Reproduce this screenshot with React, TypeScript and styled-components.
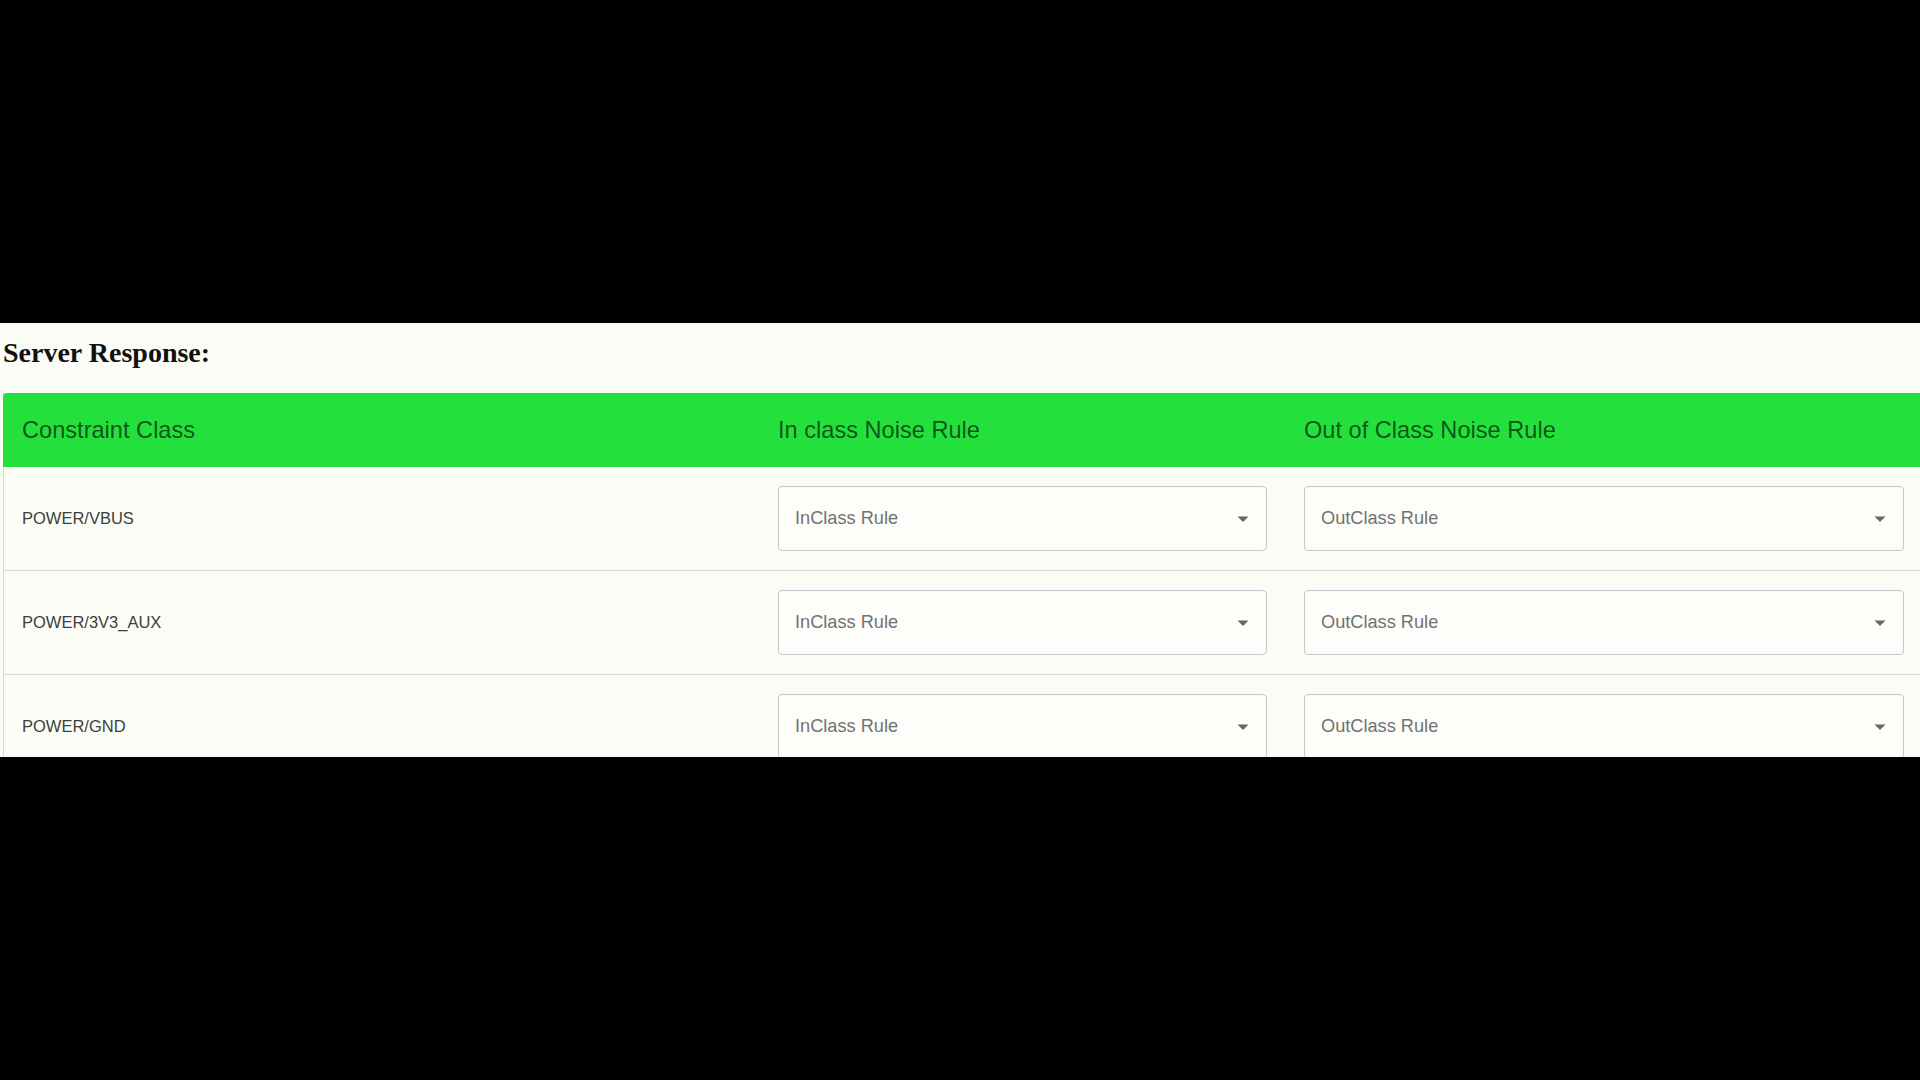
import React from "react";
import styled, { createGlobalStyle } from "styled-components";

const GlobalStyle = createGlobalStyle`
  html, body {
    margin: 0;
    padding: 0;
    background: #000;
  }
`;

const Page = styled.div`
  height: 100vh;
  display: flex;
  flex-direction: column;
  justify-content: flex-start;
  padding-top: 323px;
  box-sizing: border-box;
`;

const Frame = styled.div`
  height: 434px;
  overflow: hidden;
  background: #fcfcf7;
  padding-left: 3px;
`;

const Heading = styled.h2`
  margin: 14px 0 24px 0;
  font-family: "Liberation Serif", "Times New Roman", serif;
  font-weight: bold;
  font-size: 28px;
  line-height: 32px;
  color: #111;
`;

const Table = styled.div`
  display: flex;
  flex-direction: column;
  border-left: 1px solid #d6d6de;
`;

const HeaderRow = styled.div`
  display: grid;
  grid-template-columns: 756px 526px 1fr;
  height: 74px;
  align-items: center;
  background: #24e03c;
  border-top-left-radius: 4px;
  margin-left: -1px;
`;

const HeaderCell = styled.div`
  padding: 0 19px;
  font-family: "Liberation Sans", Arial, sans-serif;
  font-size: 23.6px;
  color: rgba(0, 0, 0, 0.64);
  white-space: nowrap;
`;

const Row = styled.div`
  display: grid;
  grid-template-columns: 755px 526px 1fr;
  height: 103px;
  align-items: center;
  border-bottom: 1px solid #d8d8e0;
`;

const LabelCell = styled.div`
  padding: 0 18px;
  font-family: "Liberation Sans", Arial, sans-serif;
  font-size: 16.5px;
  color: #3e3e3e;
`;

const SelectCell = styled.div<{ $right: number }>`
  padding: 0 ${(p) => p.$right}px 0 19px;
`;

const SelectBox = styled.div`
  height: 65px;
  box-sizing: border-box;
  border: 1px solid #c6c6d0;
  border-radius: 4px;
  display: flex;
  align-items: center;
  justify-content: space-between;
  padding: 0 11px 0 16px;
  font-family: "Liberation Sans", Arial, sans-serif;
  font-size: 18.2px;
  color: #727272;
  background: #fdfdfa;
`;

const Arrow = () => (
  <svg width="24" height="24" viewBox="0 0 24 24" fill="#666">
    <path d="M6.5 9.5l5.5 5.5 5.5-5.5z" />
  </svg>
);

const rows = ["POWER/VBUS", "POWER/3V3_AUX", "POWER/GND"];

export default function App() {
  return (
    <>
      <GlobalStyle />
      <Page>
        <Frame>
          <Heading>Server Response:</Heading>
          <Table>
            <HeaderRow>
              <HeaderCell>Constraint Class</HeaderCell>
              <HeaderCell>In class Noise Rule</HeaderCell>
              <HeaderCell>Out of Class Noise Rule</HeaderCell>
            </HeaderRow>
            {rows.map((name) => (
              <Row key={name}>
                <LabelCell>{name}</LabelCell>
                <SelectCell $right={18}>
                  <SelectBox>
                    InClass Rule
                    <Arrow />
                  </SelectBox>
                </SelectCell>
                <SelectCell $right={16}>
                  <SelectBox>
                    OutClass Rule
                    <Arrow />
                  </SelectBox>
                </SelectCell>
              </Row>
            ))}
          </Table>
        </Frame>
      </Page>
    </>
  );
}
